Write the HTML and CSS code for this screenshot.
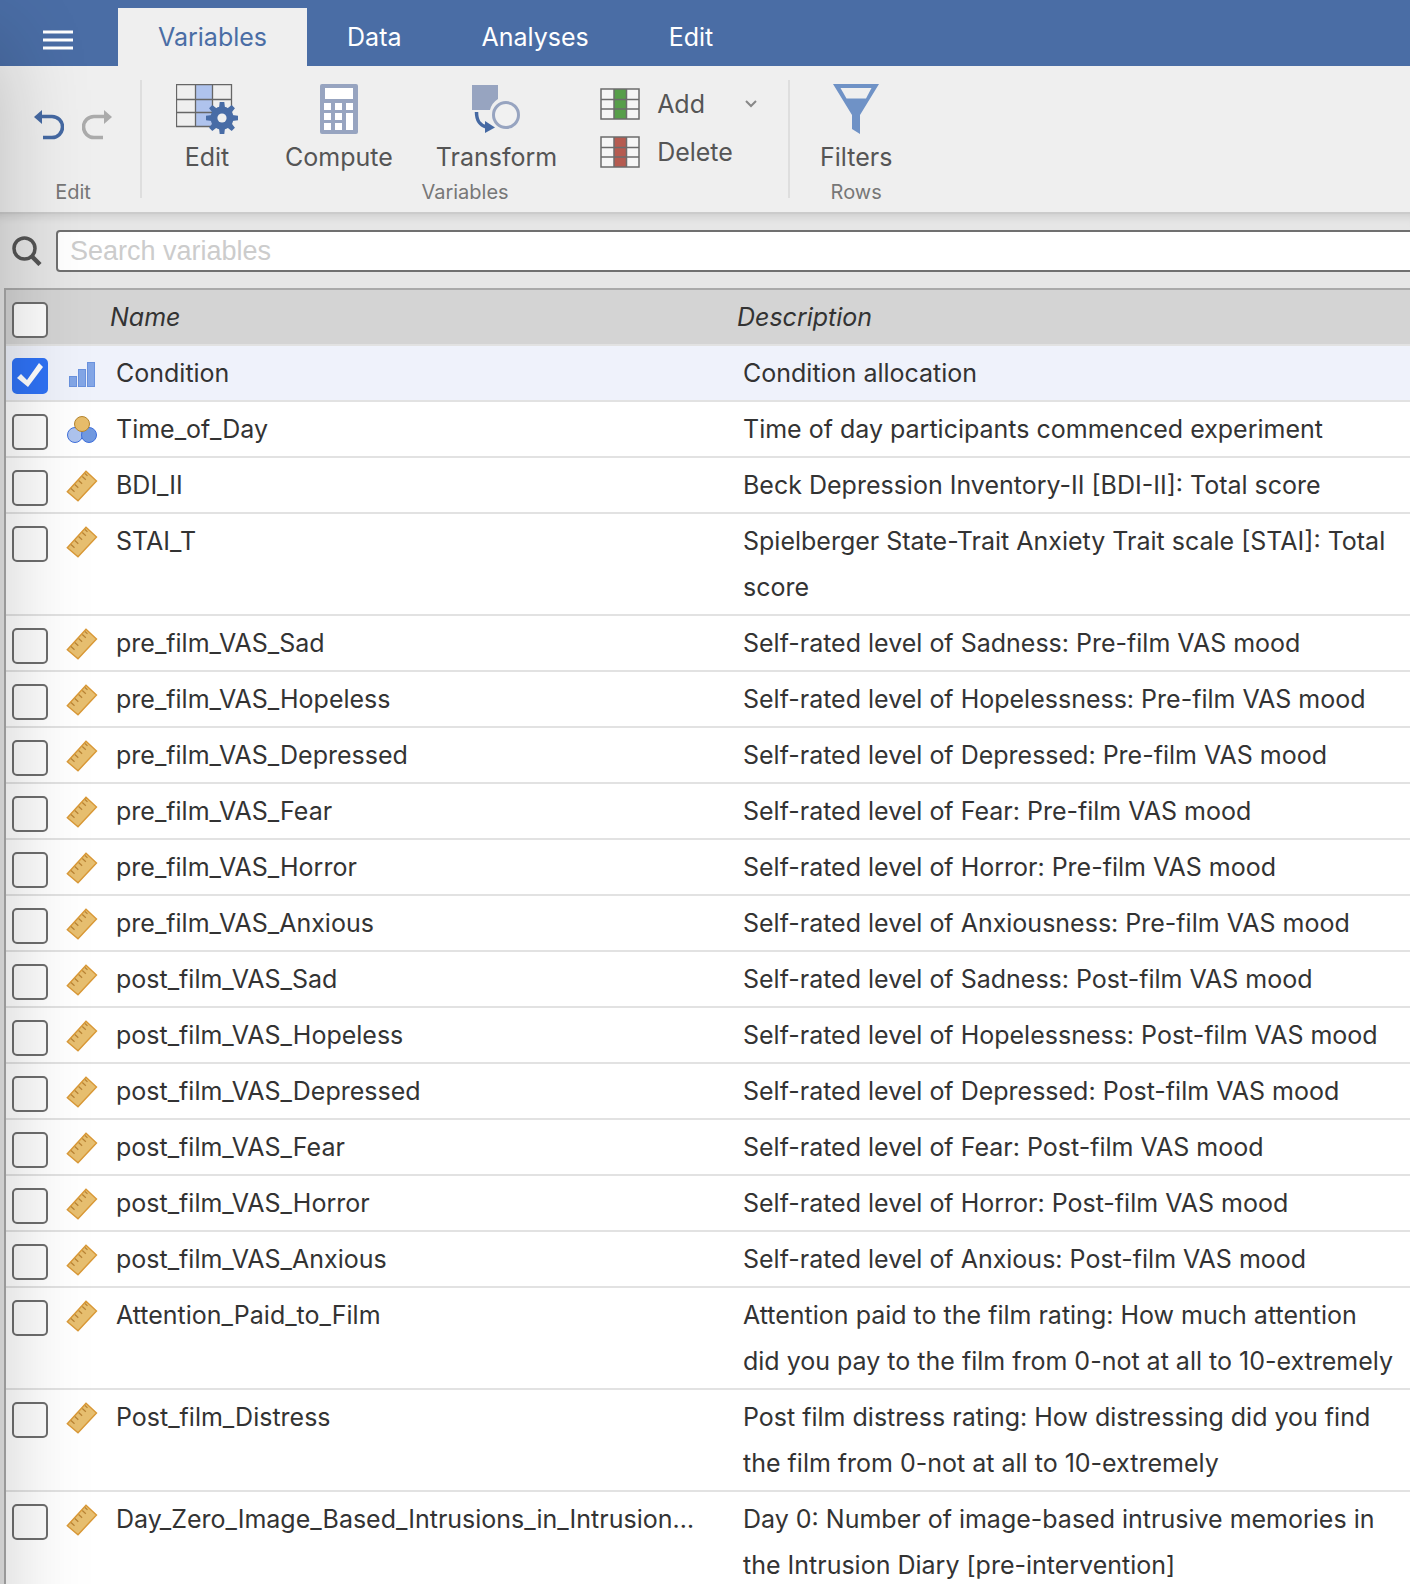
FILE: index.html
```html
<!DOCTYPE html>
<html lang="en">
<head>
  <meta charset="UTF-8">
  <title>Variables</title>
  <link rel="stylesheet" href="styles.css">
</head>
<body>
  <svg class="symbols" aria-hidden="true">
    <symbol id="ordinal" viewBox="0 0 32 32">
      <g fill="#83a6e6" stroke="#6a92de">
        <rect x="3.5" y="18.5" width="7" height="10"/>
        <rect x="12.5" y="11.5" width="7" height="17"/>
        <rect x="21.5" y="4.5" width="7" height="24"/>
      </g>
    </symbol>
    <symbol id="nominal" viewBox="0 0 32 32">
      <circle cx="9" cy="21" r="7.5" fill="#aec4ee" stroke="#3e6fdc"/>
      <circle cx="23" cy="21" r="7.5" fill="#7199e0" stroke="#3e6fdc"/>
      <circle cx="16" cy="10" r="7.5" fill="#e7bd6b" stroke="#b5852f"/>
    </symbol>
    <symbol id="continuous" viewBox="0 0 32 32">
      <path d="M1.3 21.7 20 1.3 30.5 11 12 30.8Z" fill="#e7bf70" stroke="#d99836" stroke-width="1.4"/>
      <path d="M5 18.5l3.5 3.3M8.800 14.500l3.500 3.300M12.600 10.500l3.500 3.300M16.300 6.500l3.500 3.300M19 3.500l2.500 2.400" fill="none" stroke="#b98435" stroke-width="1.2"/>
    </symbol>
  </svg>

  <header class="tabs">
    <button class="menu" aria-label="Menu">
      <svg width="30" height="20"><path d="M0 2h30M0 10h30M0 18h30" stroke="#fff" stroke-width="3"/></svg>
    </button>
    <nav>
      <button class="tab active">Variables</button>
      <button class="tab">Data</button>
      <button class="tab">Analyses</button>
      <button class="tab">Edit</button>
    </nav>
  </header>

  <div class="ribbon">
    <section class="group history">
      <div class="tools">
        <button aria-label="Undo">
          <svg width="30" height="30" viewBox="0 0 30 30"><path d="M0 7 8 0v14Z" fill="#4569a3"/><path d="M6 6.500h12a10.500 10.500 0 0 1 0 21H9" fill="none" stroke="#4569a3" stroke-width="3.600"/></svg>
        </button>
        <button aria-label="Redo">
          <svg width="30" height="30" viewBox="0 0 30 30"><path d="M30 7 22 0v14Z" fill="#ababab"/><path d="M24 6.500H12a10.500 10.500 0 0 0 0 21h9" fill="none" stroke="#ababab" stroke-width="3.600"/></svg>
        </button>
      </div>
      <div class="group-name">Edit</div>
    </section>

    <section class="group variables">
      <div class="tools">
        <button class="tool">
          <svg width="62" height="50" viewBox="0 0 62 50">
            <path d="M19 1h17v42H19z" fill="#afc3ed"/>
            <path d="M.5.5h55v42H.5zM.5 15.500h55M.5 28.500h55M19.500 0v43M36.500 0v43" fill="none" stroke="#666" stroke-width="1.300"/>
            <g fill="#486ca6" transform="translate(46 34)">
              <circle r="11.500"/>
              <g id="teeth"><path d="M-3-10-2.300-16H2.300L3-10ZM-3 10-2.300 16H2.300L3 10ZM-10-3-16-2.300V2.300L-10 3ZM10-3 16-2.300V2.300L10 3Z"/></g>
              <use href="#teeth" transform="rotate(45)"/>
              <circle r="4.600" fill="#efefef"/>
            </g>
          </svg>
          <span>Edit</span>
        </button>
        <button class="tool">
          <svg width="38" height="50" viewBox="0 0 38 50">
            <rect width="38" height="50" rx="2" fill="#97a4c0"/>
            <path d="M5 4h28v11H5zM4 19h7v7H4zM15 19h7v7h-7zM26 19h7v7h-7zM4 29h7v7H4zM15 29h7v7h-7zM26 29h7v17h-7zM4 39h7v7H4zM15 39h7v7h-7z" fill="#fff"/>
          </svg>
          <span>Compute</span>
        </button>
        <button class="tool">
          <svg width="50" height="50" viewBox="0 0 50 50">
            <path d="M1 1h26v14a18 18 0 0 0-8 11H1z" fill="#97a4c0"/>
            <circle cx="35" cy="31" r="12.500" fill="#f1f1f1" stroke="#97a4c0" stroke-width="3"/>
            <path d="M5.500 28c0 9 3 13 10 15" fill="none" stroke="#4569a3" stroke-width="3.500"/>
            <path d="M14 37 24 43.500 14 49Z" fill="#4569a3"/>
          </svg>
          <span>Transform</span>
        </button>
        <div class="stack">
          <button class="wide-tool">
            <svg width="40" height="32" viewBox="0 0 40 32"><path d="M1 1h38v30H1z" fill="#f6f6f6"/><path d="M14 1h13v30H14z" fill="#579e4a"/><path d="M1 1h38v30H1zM1 11.500h38M1 21h38M14 1v30M26.500 1v30" fill="none" stroke="#6c6c6c" stroke-width="1.500"/></svg>
            <span>Add</span>
            <svg class="chevron" width="14" height="10"><path d="M2 2l5 5 5-5" fill="none" stroke="#888" stroke-width="2"/></svg>
          </button>
          <button class="wide-tool">
            <svg width="40" height="32" viewBox="0 0 40 32"><path d="M1 1h38v30H1z" fill="#f6f6f6"/><path d="M14 1h13v30H14z" fill="#b55b50"/><path d="M1 1h38v30H1zM1 11.500h38M1 21h38M14 1v30M26.500 1v30" fill="none" stroke="#6c6c6c" stroke-width="1.500"/></svg>
            <span>Delete</span>
          </button>
        </div>
      </div>
      <div class="group-name">Variables</div>
    </section>

    <section class="group rows">
      <div class="tools">
        <button class="tool">
          <svg width="46" height="50" viewBox="0 0 46 50">
            <path d="M0 0h46L27 31v19l-8-5V31Z" fill="#6f92c6"/>
            <path d="M7.500 4h31L33 14.500H13.500Z" fill="#efefef"/>
          </svg>
          <span>Filters</span>
        </button>
      </div>
      <div class="group-name">Rows</div>
    </section>
  </div>

  <main>
    <div class="search">
      <label for="search" aria-label="Search">
        <svg width="30" height="30" viewBox="0 0 30 30" fill="none" stroke="#555"><circle cx="12.500" cy="12.500" r="10.500" stroke-width="3.500"/><path d="M19.500 20l8.500 8.500" stroke-width="4.500"/></svg>
      </label>
      <input id="search" type="text" placeholder="Search variables">
    </div>

    <div class="list">
      <table>
        <colgroup>
          <col class="col-check">
          <col class="col-type">
          <col class="col-name">
          <col>
        </colgroup>
        <thead>
          <tr>
            <th class="check"><input type="checkbox" aria-label="Select all"></th>
            <th></th>
            <th>Name</th>
            <th>Description</th>
          </tr>
        </thead>
        <tbody id="variables"></tbody>
      </table>
    </div>
  </main>

  <div class="edge-shadow"></div>

  <script>
    const variables = [
      ['ordinal', 'Condition', 'Condition allocation', true],
      ['nominal', 'Time_of_Day', 'Time of day participants commenced experiment'],
      ['continuous', 'BDI_II', 'Beck Depression Inventory-II [BDI-II]: Total score'],
      ['continuous', 'STAI_T', 'Spielberger State-Trait Anxiety Trait scale [STAI]: Total score'],
      ['continuous', 'pre_film_VAS_Sad', 'Self-rated level of Sadness: Pre-film VAS mood'],
      ['continuous', 'pre_film_VAS_Hopeless', 'Self-rated level of Hopelessness: Pre-film VAS mood'],
      ['continuous', 'pre_film_VAS_Depressed', 'Self-rated level of Depressed: Pre-film VAS mood'],
      ['continuous', 'pre_film_VAS_Fear', 'Self-rated level of Fear: Pre-film VAS mood'],
      ['continuous', 'pre_film_VAS_Horror', 'Self-rated level of Horror: Pre-film VAS mood'],
      ['continuous', 'pre_film_VAS_Anxious', 'Self-rated level of Anxiousness: Pre-film VAS mood'],
      ['continuous', 'post_film_VAS_Sad', 'Self-rated level of Sadness: Post-film VAS mood'],
      ['continuous', 'post_film_VAS_Hopeless', 'Self-rated level of Hopelessness: Post-film VAS mood'],
      ['continuous', 'post_film_VAS_Depressed', 'Self-rated level of Depressed: Post-film VAS mood'],
      ['continuous', 'post_film_VAS_Fear', 'Self-rated level of Fear: Post-film VAS mood'],
      ['continuous', 'post_film_VAS_Horror', 'Self-rated level of Horror: Post-film VAS mood'],
      ['continuous', 'post_film_VAS_Anxious', 'Self-rated level of Anxious: Post-film VAS mood'],
      ['continuous', 'Attention_Paid_to_Film', 'Attention paid to the film rating: How much attention did you pay to the film from 0-not at all to 10-extremely'],
      ['continuous', 'Post_film_Distress', 'Post film distress rating: How distressing did you find the film from 0-not at all to 10-extremely'],
      ['continuous', 'Day_Zero_Image_Based_Intrusions_in_Intrusion…', 'Day 0: Number of image-based intrusive memories in the Intrusion Diary [pre-intervention]']
    ];

    document.getElementById('variables').innerHTML = variables.map(([type, name, description, checked], i) => `
      <tr class="${checked ? 'selected' : ''}">
        <td class="check"><input type="checkbox" id="var-${i}" ${checked ? 'checked' : ''}></td>
        <td class="type"><svg width="32" height="32"><use href="#${type}"/></svg></td>
        <td class="name"><label for="var-${i}">${name}</label></td>
        <td class="description">${description}</td>
      </tr>`).join('');

    document.getElementById('variables').addEventListener('change', e => {
      e.target.closest('tr').classList.toggle('selected', e.target.checked);
    });
  </script>
</body>
</html>
```
FILE: styles.css
```css
* {
  box-sizing: border-box;
}

body {
  margin: 0;
  height: 100vh;
  display: flex;
  flex-direction: column;
  overflow: hidden;
  background: #e6e6e6;
  color: #333;
  font-family: Inter, "Liberation Sans", sans-serif;
  font-size: 25px;
}

button {
  border: none;
  padding: 0;
  background: none;
  color: inherit;
  font: inherit;
  cursor: pointer;
}

svg {
  display: block;
  flex: none;
}

.symbols {
  position: absolute;
  width: 0;
  height: 0;
}

/* tabs */

.tabs {
  display: flex;
  height: 66px;
  flex: none;
  padding-top: 8px;
  background: #4a6da5;
  color: #fff;
}

.menu {
  width: 118px;
  padding: 6px 0 0 43px;
}

.tabs nav {
  display: flex;
}

.tab {
  padding: 0 40px;
}

.tab.active {
  background: #efefef;
  color: #4a6da5;
}

/* ribbon */

.ribbon {
  display: flex;
  flex: none;
  height: 148px;
  padding: 14px 0;
  border-bottom: 2px solid #cbcbcb;
  background: #efefef;
  color: #555;
}

.group {
  display: flex;
  flex-direction: column;
  justify-content: space-between;
  padding: 4px 30px 0;
  border-right: 2px solid #dedede;
}

.group:last-child {
  border-right: none;
}

.tools {
  display: flex;
}

.group-name {
  color: #777;
  font-size: 20px;
  line-height: 12px;
  text-align: center;
}

.history {
  padding-left: 34px;
  padding-right: 28px;
}

.history .tools {
  gap: 18px;
  padding-top: 26px;
}

.variables .tools {
  gap: 43px;
}

.tool {
  display: flex;
  flex-direction: column;
  align-items: center;
  gap: 8px;
  min-width: 70px;
  line-height: 30px;
}

.stack {
  display: flex;
  flex-direction: column;
  gap: 16px;
  padding-top: 4px;
}

.wide-tool {
  display: flex;
  align-items: center;
  gap: 17px;
  line-height: 32px;
}

.chevron {
  margin-left: 22px;
}

/* search */

main {
  display: flex;
  flex-direction: column;
  flex: 1;
  min-height: 0;
  box-shadow: inset 0 10px 10px -8px rgba(0, 0, 0, 0.12);
}

.search {
  display: flex;
  align-items: center;
  gap: 14px;
  padding: 16px 0 16px 12px;
}

.search input {
  flex: 1;
  height: 42px;
  margin-right: -10px;
  padding: 0 12px;
  border: 2px solid #707070;
  border-radius: 4px;
  background: #fff;
  font-family: "Liberation Sans", Arial, sans-serif;
  font-size: 27px;
}

.search input::placeholder {
  color: #ccc;
}

/* variable list */

.list {
  flex: 1;
  min-height: 0;
  margin-left: 4px;
  overflow-y: auto;
  scrollbar-width: none;
  border-top: 2px solid #a9a9a9;
  border-left: 2px solid #a9a9a9;
  background: #fff;
}

table {
  width: 100%;
  table-layout: fixed;
  border-spacing: 0;
}

.col-check {
  width: 48px;
}

.col-type {
  width: 56px;
}

.col-name {
  width: 627px;
}

th,
td {
  padding: 4px 0 4px 6px;
  border-bottom: 2px solid #e2e2e2;
  line-height: 46px;
  text-align: left;
  vertical-align: top;
}

th {
  padding-left: 0;
  background: #d4d4d4;
  font-style: italic;
  font-weight: normal;
}

.check {
  padding: 12px 0 0 6px;
}

.type {
  padding: 12px 0 0 12px;
}

.name {
  padding-right: 24px;
  overflow: hidden;
  text-overflow: ellipsis;
  white-space: nowrap;
}

.description {
  padding-right: 12px;
}

.selected td {
  background: #eff2fb;
}

input[type="checkbox"] {
  display: block;
  appearance: none;
  width: 36px;
  height: 36px;
  margin: 0;
  border: 2px solid #6e6e6e;
  border-radius: 5px;
  background: #fdfdfd;
}

input[type="checkbox"]:checked {
  border-color: #2f72f5;
  background: #2f72f5;
}

input[type="checkbox"]:checked::after {
  content: "";
  display: block;
  width: 32px;
  height: 32px;
  background: #fff;
  clip-path: polygon(3px 18px, 7px 14px, 13px 20px, 25px 3px, 29px 7px, 14px 27px);
}

/* soft shade along the left edge of the window */
.edge-shadow {
  position: fixed;
  top: 40px;
  bottom: -100px;
  left: -100px;
  width: 100px;
  box-shadow: 0 0 90px rgba(0, 0, 0, 0.22);
  pointer-events: none;
}
```
